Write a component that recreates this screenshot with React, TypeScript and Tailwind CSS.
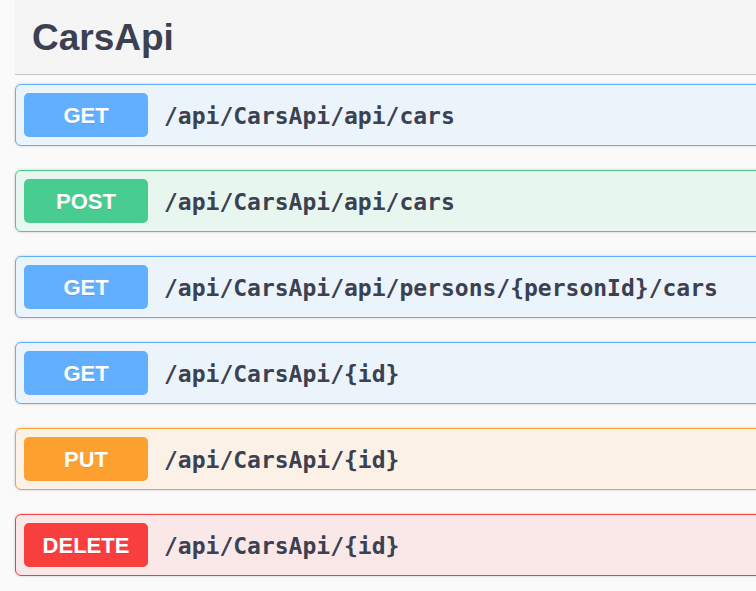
import React from "react";

type Op = { method: string; path: string; badge: string; bg: string; border: string };

const ops: Op[] = [
  { method: "GET", path: "/api/CarsApi/api/cars", badge: "bg-[#61affe]", bg: "bg-[#ebf3fb]", border: "border-[#61affe]" },
  { method: "POST", path: "/api/CarsApi/api/cars", badge: "bg-[#49cc90]", bg: "bg-[#e8f6f0]", border: "border-[#49cc90]" },
  { method: "GET", path: "/api/CarsApi/api/persons/{personId}/cars", badge: "bg-[#61affe]", bg: "bg-[#ebf3fb]", border: "border-[#61affe]" },
  { method: "GET", path: "/api/CarsApi/{id}", badge: "bg-[#61affe]", bg: "bg-[#ebf3fb]", border: "border-[#61affe]" },
  { method: "PUT", path: "/api/CarsApi/{id}", badge: "bg-[#fca130]", bg: "bg-[#fbf1e6]", border: "border-[#fca130]" },
  { method: "DELETE", path: "/api/CarsApi/{id}", badge: "bg-[#f93e3e]", bg: "bg-[#fae7e7]", border: "border-[#f93e3e]" },
];

export default function App() {
  return (
    <div className="w-[756px] h-[591px] overflow-hidden bg-[#fafafa] pl-[15px]" style={{ fontFamily: '"Liberation Sans", Arial, sans-serif' }}>
      <div className="w-[900px]">
        <div className="h-[75px] bg-[#f5f5f5] border-b border-[#c4c6cb] flex items-center pl-[17px]">
          <h2 className="text-[37px] font-bold text-[#3b4151] leading-none">CarsApi</h2>
        </div>
        <div className="flex flex-col gap-[24px] pt-[9px]">
          {ops.map((op, i) => (
            <div
              key={i}
              className={`h-[62px] rounded-[6px] border ${op.border} ${op.bg} flex items-center pl-[8px] shadow-[0_0_3px_rgba(0,0,0,0.19)]`}
            >
              <div
                className={`w-[124px] h-[44px] rounded-[5px] ${op.badge} flex items-center justify-center text-white font-bold text-[22px] [text-shadow:0_1px_0_rgba(0,0,0,0.1)]`}
              >
                {op.method}
              </div>
              <div
                className="ml-[16px] mt-[3px] text-[#3b4151] font-bold text-[23px]"
                style={{ fontFamily: '"DejaVu Sans Mono", "Liberation Mono", monospace' }}
              >
                {op.path}
              </div>
            </div>
          ))}
        </div>
      </div>
    </div>
  );
}
